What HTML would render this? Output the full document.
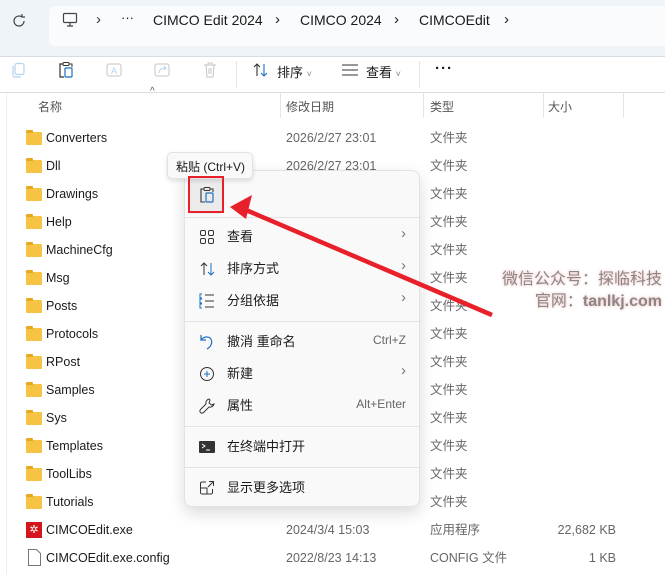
<!DOCTYPE html>
<html><head><meta charset="utf-8"><style>
*{margin:0;padding:0;box-sizing:border-box}
body{width:665px;height:574px;overflow:hidden;background:#fff;font-family:"Liberation Sans","Noto Sans CJK SC",sans-serif;font-size:12.5px;color:#1a1a1a;position:relative}
.abs{position:absolute}
.top{left:0;top:0;width:665px;height:57px;background:#eff4f9;border-bottom:1px solid #d6dde5}
.addr{left:49px;top:6px;width:620px;height:40px;background:#f9fbfd;border-radius:6px}
.hdr{top:92px;height:26px;width:665px;left:0}
.hdr span{position:absolute;top:6px;color:#555;font-size:12px}
.vl{position:absolute;top:92px;width:1px;height:26px;background:#e5e5e5}
.row{position:absolute;left:0;width:665px;height:28px}
.row span{line-height:18px}
.row .f{position:absolute;left:26px;top:8px;width:16px;height:13px;background:#f5c445;border-radius:1px}
.row .f:before{content:"";position:absolute;left:0;top:-2px;width:7px;height:3px;background:#e8a91f;border-radius:1px 1px 0 0}
.row .n{position:absolute;left:46px;top:5px}
.row .d{position:absolute;left:286px;top:5px;color:#666}
.row .t{position:absolute;left:430px;top:5px;color:#666}
.row .s{position:absolute;right:49px;top:5px;color:#666}
.menu{left:184px;top:170px;width:236px;height:337px;background:#f9f9f9;border:1px solid #e2e2e2;border-radius:8px;box-shadow:0 6px 16px rgba(0,0,0,.15)}
.mi{position:absolute;left:0;width:236px;height:30px;font-size:13px}
.mi .l{position:absolute;left:42px;top:4px}
.mi .k{position:absolute;right:15px;top:6px;font-size:12px;color:#666}
.mi .ar{position:absolute;right:15px;top:3px;color:#777;font-size:15px}
.mi svg{position:absolute;left:14px;top:7px}
.sep{position:absolute;left:0;width:236px;height:1px;background:#e3e3e3}
</style></head><body>
<div class="abs top"></div>
<div class="abs addr"></div>
<svg class="abs" style="left:11px;top:13px" width="16" height="16" viewBox="0 0 16 16"><path d="M13 8a5 5 0 1 1-2-4M11 1v3h3" fill="none" stroke="#444" stroke-width="1.2"/></svg>
<svg class="abs" style="left:62px;top:12px" width="16" height="16" viewBox="0 0 16 16"><rect x="1.5" y="1.5" width="13" height="9" rx="1" fill="none" stroke="#444" stroke-width="1.2"/><path d="M5 14h6M8 11v3" stroke="#444" stroke-width="1.2"/></svg>
<div class="abs" style="left:96px;top:11px;font-size:15px;color:#333">›</div>
<div class="abs" style="left:121px;top:10px;font-size:13px">···</div>
<div class="abs" style="left:153px;top:12px;font-size:14px">CIMCO Edit 2024</div>
<div class="abs" style="left:275px;top:11px;font-size:15px">›</div>
<div class="abs" style="left:300px;top:12px;font-size:14px">CIMCO 2024</div>
<div class="abs" style="left:394px;top:11px;font-size:15px">›</div>
<div class="abs" style="left:419px;top:12px;font-size:14px">CIMCOEdit</div>
<div class="abs" style="left:504px;top:11px;font-size:15px">›</div>
<svg class="abs" style="left:10px;top:62px" width="16" height="16" viewBox="0 0 16 16"><rect x="5" y="1.5" width="9" height="11" rx="2" fill="none" stroke="#b8d3ee" stroke-width="1.2"/><path d="M3 4v9a2 2 0 0 0 2 2h6" fill="none" stroke="#b8d3ee" stroke-width="1.2"/></svg>
<svg class="abs" style="left:57px;top:61px" width="18" height="18" viewBox="0 0 18 18"><path d="M6 3H3v13h4" fill="none" stroke="#333" stroke-width="1.2"/><rect x="6" y="1.5" width="6" height="3" rx="1" fill="none" stroke="#333"/><path d="M12 3h3v3" fill="none" stroke="#333"/><rect x="8" y="7" width="7" height="9" rx="1" fill="none" stroke="#1a6fc4" stroke-width="1.2"/></svg>
<svg class="abs" style="left:105px;top:61px" width="18" height="18" viewBox="0 0 18 18"><rect x="2" y="3" width="14" height="12" rx="2" fill="none" stroke="#c5c5c5"/><text x="6" y="13" font-size="9" fill="#b8d3ee" font-family="Liberation Sans">A</text></svg>
<svg class="abs" style="left:153px;top:61px" width="18" height="18" viewBox="0 0 18 18"><rect x="2" y="3" width="14" height="12" rx="2" fill="none" stroke="#c5c5c5"/><path d="M6 12c0-4 3-5 7-5M11 5l2 2-2 2" fill="none" stroke="#b8d3ee"/></svg>
<svg class="abs" style="left:201px;top:61px" width="18" height="18" viewBox="0 0 18 18"><path d="M3 4h12M7 4V2h4v2M5 4l1 12h6l1-12M8 7v6M10 7v6" fill="none" stroke="#c5c5c5"/></svg>
<div class="abs" style="left:236px;top:61px;width:1px;height:27px;background:#e3e3e3"></div>
<svg class="abs" style="left:252px;top:62px" width="18" height="16" viewBox="0 0 18 16"><path d="M5 14V2M2 5l3-3 3 3" fill="none" stroke="#333" stroke-width="1.1"/><path d="M12 2v12M9 11l3 3 3-3" fill="none" stroke="#1a6fc4" stroke-width="1.1"/></svg>
<div class="abs" style="left:277px;top:62px;font-size:13px">排序 <span style="font-size:9px;color:#888">˅</span></div>
<svg class="abs" style="left:342px;top:64px" width="16" height="12"><path d="M0 1h16M0 6h16M0 11h16" stroke="#333"/></svg>
<div class="abs" style="left:366px;top:62px;font-size:13px">查看 <span style="font-size:9px;color:#888">˅</span></div>
<div class="abs" style="left:419px;top:61px;width:1px;height:27px;background:#e3e3e3"></div>
<div class="abs" style="left:435px;top:60px;font-size:15px;font-weight:bold;letter-spacing:1px">···</div>
<div class="abs" style="left:0;top:92px;width:665px;height:1px;background:#d6dde5"></div>
<div class="abs" style="left:6px;top:93px;width:1px;height:481px;background:#eee"></div>
<div class="abs" style="left:150px;top:86px;font-size:10px;color:#555">^</div>
<div class="abs hdr"><span style="left:38px">名称</span><span style="left:286px">修改日期</span><span style="left:430px">类型</span><span style="left:548px">大小</span></div>
<div class="vl" style="left:280px"></div><div class="vl" style="left:423px"></div><div class="vl" style="left:543px"></div><div class="vl" style="left:623px"></div>
<div class="row" style="top:124px"><i class="f"></i><span class="n">Converters</span><span class="d">2026/2/27 23:01</span><span class="t">文件夹</span></div>
<div class="row" style="top:152px"><i class="f"></i><span class="n">Dll</span><span class="d">2026/2/27 23:01</span><span class="t">文件夹</span></div>
<div class="row" style="top:180px"><i class="f"></i><span class="n">Drawings</span><span class="t">文件夹</span></div>
<div class="row" style="top:208px"><i class="f"></i><span class="n">Help</span><span class="t">文件夹</span></div>
<div class="row" style="top:236px"><i class="f"></i><span class="n">MachineCfg</span><span class="t">文件夹</span></div>
<div class="row" style="top:264px"><i class="f"></i><span class="n">Msg</span><span class="t">文件夹</span></div>
<div class="row" style="top:292px"><i class="f"></i><span class="n">Posts</span><span class="t">文件夹</span></div>
<div class="row" style="top:320px"><i class="f"></i><span class="n">Protocols</span><span class="t">文件夹</span></div>
<div class="row" style="top:348px"><i class="f"></i><span class="n">RPost</span><span class="t">文件夹</span></div>
<div class="row" style="top:376px"><i class="f"></i><span class="n">Samples</span><span class="t">文件夹</span></div>
<div class="row" style="top:404px"><i class="f"></i><span class="n">Sys</span><span class="t">文件夹</span></div>
<div class="row" style="top:432px"><i class="f"></i><span class="n">Templates</span><span class="t">文件夹</span></div>
<div class="row" style="top:460px"><i class="f"></i><span class="n">ToolLibs</span><span class="t">文件夹</span></div>
<div class="row" style="top:488px"><i class="f"></i><span class="n">Tutorials</span><span class="t">文件夹</span></div>
<div class="row" style="top:516px"><span style="position:absolute;left:26px;top:6px;width:16px;height:16px;background:#d4161c;color:#fff;font-size:11px;text-align:center;line-height:16px">✲</span><span class="n">CIMCOEdit.exe</span><span class="d">2024/3/4 15:03</span><span class="t">应用程序</span><span class="s">22,682 KB</span></div>
<div class="row" style="top:544px"><svg style="position:absolute;left:28px;top:5px" width="13" height="17"><path d="M.5 .5h8l4 4v12H.5z" fill="#fff" stroke="#777"/></svg><span class="n">CIMCOEdit.exe.config</span><span class="d">2022/8/23 14:13</span><span class="t">CONFIG 文件</span><span class="s">1 KB</span></div>
<div class="abs" style="left:502px;top:269px;font-size:16px;color:#888;text-align:right;width:160px;line-height:22px;text-shadow:0 0 3px #f6b0b0">微信公众号：探临科技<br>官网：<b>tanlkj.com</b></div>
<div class="abs menu">
<div class="abs" style="left:3px;top:6px;width:35px;height:37px;background:#ebebeb;border-radius:4px"></div>
<svg class="abs" style="left:13px;top:15px" width="18" height="18" viewBox="0 0 18 18"><path d="M6 3H3v13h4" fill="none" stroke="#333" stroke-width="1.1"/><rect x="6" y="1.5" width="6" height="3" rx="1" fill="none" stroke="#333"/><path d="M12 3h3v3" fill="none" stroke="#333"/><rect x="8" y="7" width="7" height="9" rx="1" fill="none" stroke="#1a6fc4" stroke-width="1.2"/></svg>
<div class="sep" style="top:46px"></div>
<div class="mi" style="top:51px"><svg width="16" height="16"><g fill="none" stroke="#333"><rect x="1.5" y="1.5" width="5" height="5" rx="1.5"/><rect x="9.5" y="1.5" width="5" height="5" rx="1.5"/><rect x="1.5" y="9.5" width="5" height="5" rx="1.5"/><rect x="9.5" y="9.5" width="5" height="5" rx="1.5"/></g></svg><span class="l">查看</span><span class="ar">›</span></div>
<div class="mi" style="top:83px"><svg width="18" height="16"><path d="M5 14V2M2 5l3-3 3 3" fill="none" stroke="#333"/><path d="M12 2v12M9 11l3 3 3-3" fill="none" stroke="#1a6fc4"/></svg><span class="l">排序方式</span><span class="ar">›</span></div>
<div class="mi" style="top:115px"><svg width="16" height="16"><path d="M6 2h9M6 8h9M6 14h9" stroke="#333"/><path d="M3 1H1v4h2M3 6H1v4h2M3 11H1v4h2" fill="none" stroke="#1a6fc4"/></svg><span class="l">分组依据</span><span class="ar">›</span></div>
<div class="sep" style="top:150px"></div>
<div class="mi" style="top:156px"><svg width="16" height="16"><path d="M2 1v5h5M2 6c2-3 6-4 9-2 3 3 2 8-3 11" fill="none" stroke="#1a6fc4" stroke-width="1.2"/></svg><span class="l">撤消 重命名</span><span class="k">Ctrl+Z</span></div>
<div class="mi" style="top:188px"><svg width="16" height="16"><circle cx="8" cy="8" r="6.5" fill="none" stroke="#333"/><path d="M8 5v6M5 8h6" stroke="#1a6fc4"/></svg><span class="l">新建</span><span class="ar">›</span></div>
<div class="mi" style="top:220px"><svg width="16" height="16"><path d="M10 1a4 4 0 0 0-3 5L1.5 11.5a2 2 0 0 0 3 3L10 9a4 4 0 0 0 5-3l-2.5 1L10 5l1-3z" fill="none" stroke="#333"/></svg><span class="l">属性</span><span class="k">Alt+Enter</span></div>
<div class="sep" style="top:255px"></div>
<div class="mi" style="top:261px"><svg width="16" height="16"><rect x="0" y="2" width="16" height="12" rx="1" fill="#333"/><path d="M3 5l3 2-3 2M7 11h4" stroke="#fff" fill="none"/></svg><span class="l">在终端中打开</span></div>
<div class="sep" style="top:296px"></div>
<div class="mi" style="top:302px"><svg width="16" height="16"><path d="M7 2H3a1.5 1.5 0 0 0-1.5 1.5v9A1.5 1.5 0 0 0 3 14h9a1.5 1.5 0 0 0 1.5-1.5V9M1.5 8H8v6M10 1.5h4.5V6M14.5 1.5L9 7" fill="none" stroke="#333"/></svg><span class="l">显示更多选项</span></div>
</div>
<div class="abs" style="left:167px;top:152px;width:86px;height:27px;background:#f9f9f9;border:1px solid #e2e2e2;border-radius:5px;box-shadow:0 2px 5px rgba(0,0,0,.12);font-size:12px;padding:5px 0 0 8px">粘贴 (Ctrl+V)</div>
<div class="abs" style="left:188px;top:176px;width:36px;height:37px;border:2px solid #e8202a"></div>
<svg class="abs" style="left:0;top:0" width="665" height="574"><path d="M492 315L246 210" stroke="#e8202a" stroke-width="4.5"/><path d="M230 207l22-12-6 24z" fill="#e8202a"/></svg>
</body></html>
